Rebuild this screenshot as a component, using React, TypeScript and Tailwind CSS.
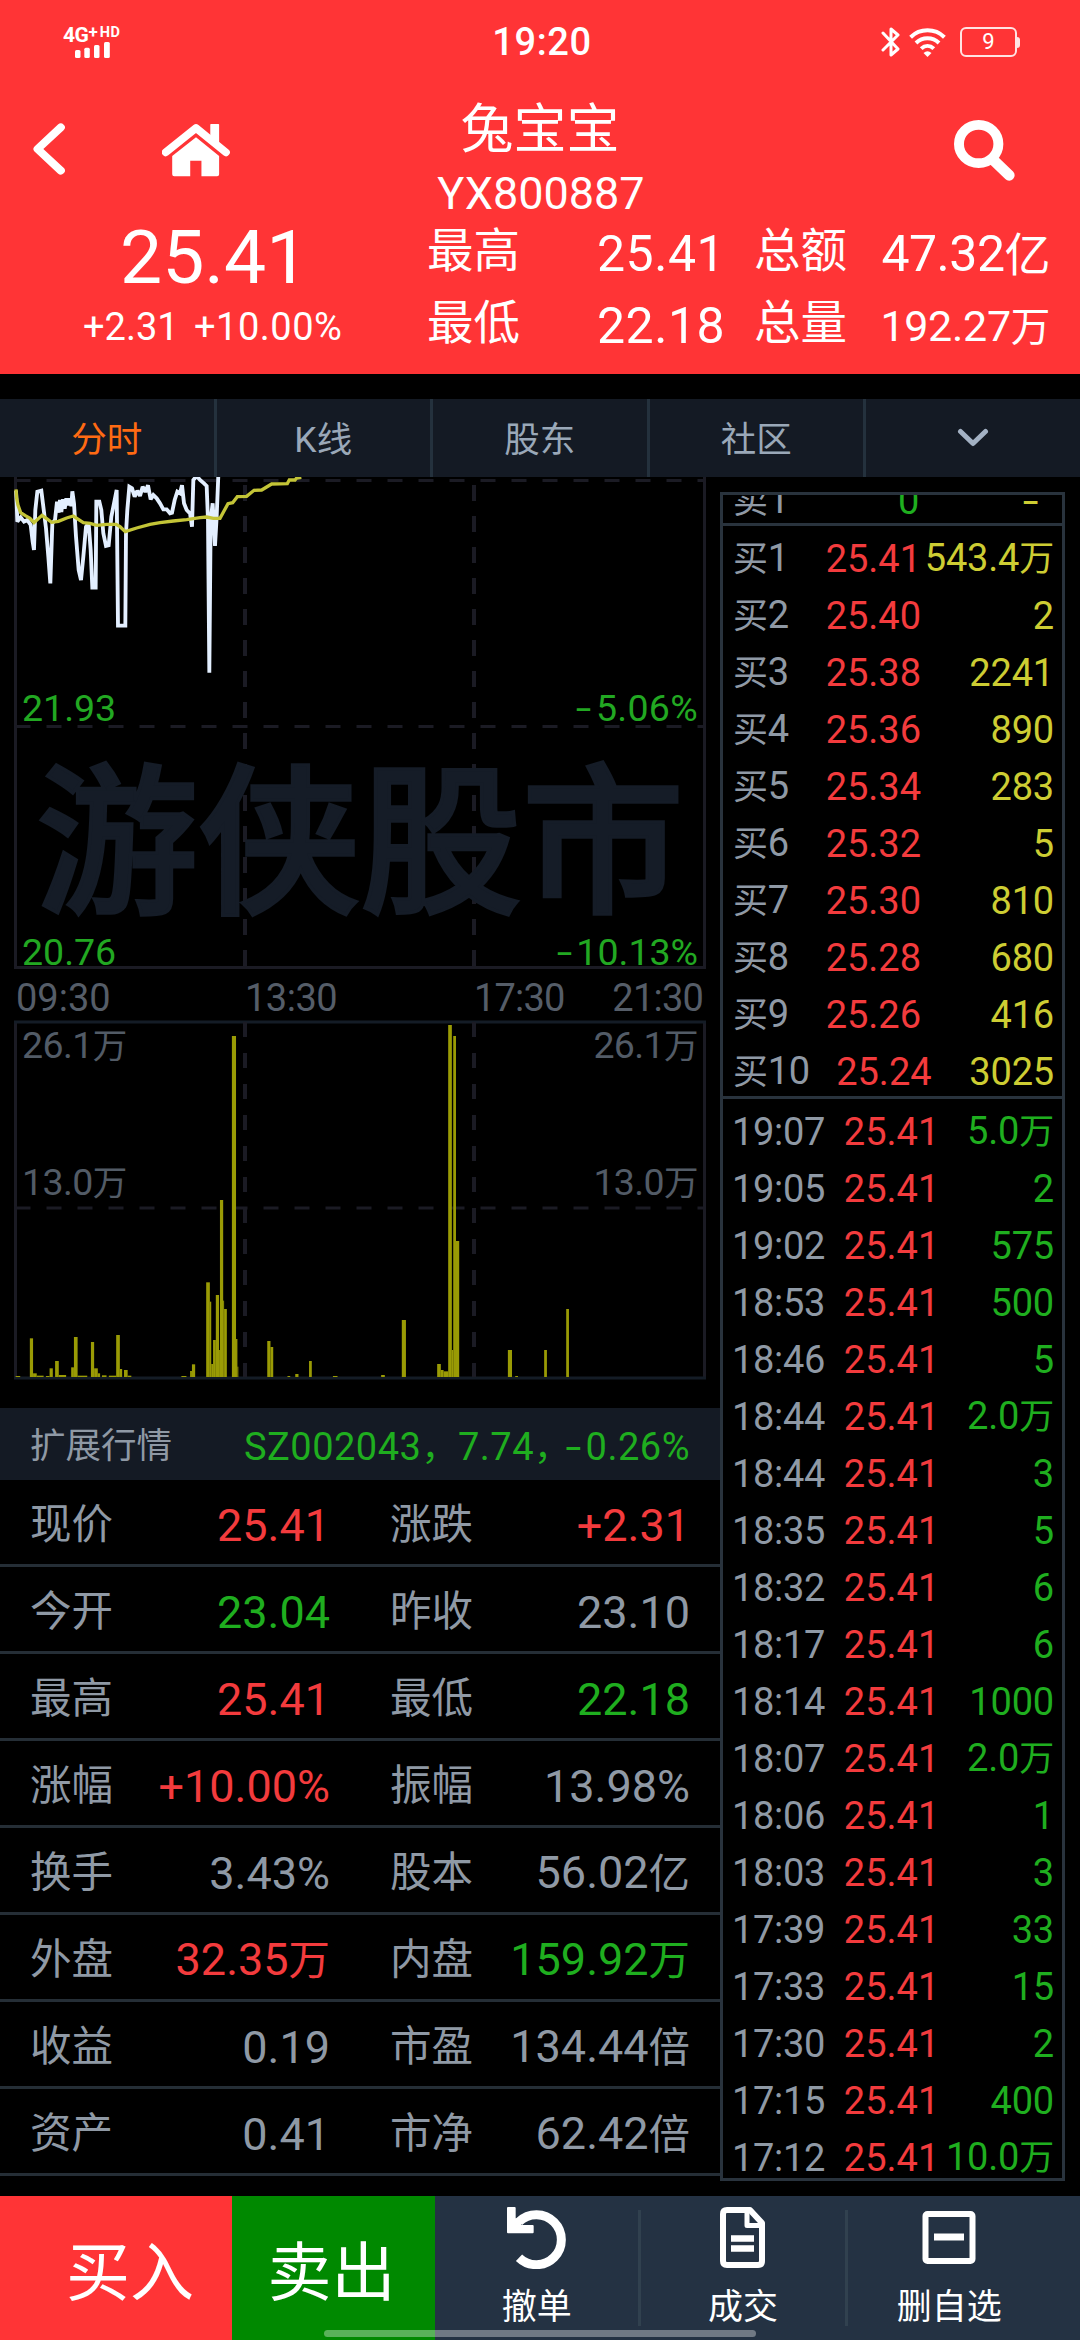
import React from "react";

const RED = "text-[#f33b3d]";
const GREEN = "text-[#1fae1f]";
const GRAY = "text-[#8f99a5]";
const YELLOW = "text-[#cdcd33]";

/* Latin runs in Roboto, Chinese characters slightly smaller beside them. */
function Mixed({ text }: { text: string }) {
  return (
    <>
      {text.split(/([\u4e00-\u9fff]+)/).map((part, i) =>
        i % 2 === 1 ? (
          <span key={i} className="text-[0.92em]">
            {part}
          </span>
        ) : (
          part
        )
      )}
    </>
  );
}

/* Minus sign drawn a little wider than the font's hyphen. */
function Minus() {
  return <span className="mr-[4px] inline-block origin-right scale-x-150">-</span>;
}

function StatusBar() {
  return (
    <div className="flex h-[84px] items-center">
      <div className="flex w-[442px] flex-col items-start pl-[63px]">
        <div className="flex h-[15px] items-start font-bold leading-none">
          <span className="text-[21px] leading-[16px] tracking-[-0.5px]">4G</span>
          <span className="text-[17px] leading-[10px]">+</span>
          <span className="ml-[2px] text-[14.5px] leading-[11px] tracking-[0.5px]">HD</span>
        </div>
        <svg className="ml-[12px]" width="35" height="16" viewBox="0 0 35 16" fill="#fff">
          <rect x="0" y="8" width="5.5" height="8" rx="1.5" />
          <rect x="9.3" y="5.7" width="5.5" height="10.3" rx="1.5" />
          <rect x="19" y="3" width="5.5" height="13" rx="1.5" />
          <rect x="29" y="0" width="5.8" height="16" rx="1.5" />
        </svg>
      </div>
      <div className="w-[200px] text-center text-[38px] font-medium leading-none tracking-[0.6px]">19:20</div>
      <div className="flex flex-1 items-center pl-[239px]">
        <svg width="20" height="30" viewBox="0 0 20 30" fill="none" stroke="#fff" strokeWidth="3" strokeLinejoin="round" strokeLinecap="round">
          <path d="M2 6 L17 22 L10 28 L10 2 L17 8 L2 23" />
        </svg>
        <svg className="ml-[8px]" width="37" height="29" viewBox="0 0 37 29" fill="none" stroke="#fff" strokeWidth="4">
          <path d="M1.6 9.2 C11 0 26 0 35.4 9.2" />
          <path d="M7 15 C13.5 8.8 23.5 8.8 30 15" />
          <path d="M12.2 20.6 C16 17 21 17 24.8 20.6" />
          <path d="M14.5 25 Q18.5 21.5 22.5 25 L18.5 29Z" fill="#fff" stroke="none" />
        </svg>
        <div className="ml-[14px] flex h-[30px] w-[57px] items-center justify-center rounded-[6px] border-2 border-[#ffe3e3] text-[22px] leading-none">
          9
        </div>
        <div className="h-[11px] w-[3px] rounded-r-sm bg-[#ffe3e3]" />
      </div>
    </div>
  );
}

function HeaderStat({ label, children }: { label: string; children: React.ReactNode }) {
  return (
    <div className="flex h-[72px] items-center justify-between">
      <span className="text-[46.5px] leading-none">{label}</span>
      {children}
    </div>
  );
}

function Header() {
  return (
    <header className="h-[374px] bg-[#ff3436] text-white">
      <StatusBar />
      <div className="flex h-[137px]">
        <div className="flex w-[400px] items-start pt-[39px]">
          <svg className="ml-[33px]" width="32" height="52" viewBox="96 371 91 154" preserveAspectRatio="none" fill="none" stroke="#fff" strokeWidth="23" strokeLinecap="round" strokeLinejoin="round">
            <path d="M175 384 L109 448 L175 512" />
          </svg>
          <svg className="ml-[97px]" width="68" height="54" viewBox="469 367 200 162" preserveAspectRatio="none">
            <path d="M611 372 Q611 370 613 370 H635 Q637 370 637 372 V430 L611 408Z" fill="#fff" />
            <path d="M480 455 L569 382 L657 455" fill="none" stroke="#fff" strokeWidth="23" strokeLinecap="round" strokeLinejoin="round" />
            <path d="M569 410 L637 466 V521 Q637 527 631 527 H585 V480 H552 V527 H505 Q499 527 499 521 V466Z" fill="#fff" />
          </svg>
        </div>
        <div className="flex w-[280px] flex-col items-center">
          <div className="h-[88px] text-[53px] leading-[92px]">兔宝宝</div>
          <div className="pl-[2px] text-[45px] leading-[44px]">YX800887</div>
        </div>
        <div className="flex flex-1 items-start pl-[274px] pt-[35px]">
          <svg width="61" height="62" viewBox="1201 356 178 186" preserveAspectRatio="none" fill="none" stroke="#fff">
            <circle cx="1273" cy="431" r="57.5" strokeWidth="29" />
            <path d="M1318 481 L1362 525" strokeWidth="32" strokeLinecap="round" />
          </svg>
        </div>
      </div>
      <div className="flex h-[152px]">
        <div className="w-[427px]">
          <div className="pl-[120px] text-[75px] leading-[72px]">25.41</div>
          <div className="flex pt-[14px] text-[38px] leading-[40px]">
            <span className="w-[112px] pl-[83px]">+2.31</span>
            <span className="pl-[82px] tracking-[0.5px]">+10.00%</span>
          </div>
        </div>
        <div className="mt-[-6px] w-[294px] pr-0">
          <HeaderStat label="最高">
            <span className="w-[124px] pt-[6px] text-[50px] leading-none tracking-[0.5px]">25.41</span>
          </HeaderStat>
          <HeaderStat label="最低">
            <span className="w-[124px] pt-[6px] text-[50px] leading-none tracking-[0.5px]">22.18</span>
          </HeaderStat>
        </div>
        <div className="ml-[33px] mt-[-6px] w-[296px]">
          <HeaderStat label="总额">
            <span className="whitespace-nowrap pt-[6px] text-[50px] leading-none tracking-[-0.5px]">
              <Mixed text="47.32亿" />
            </span>
          </HeaderStat>
          <HeaderStat label="总量">
            <span className="whitespace-nowrap pt-[6px] text-[43px] leading-none tracking-[-0.3px]">
              <Mixed text="192.27万" />
            </span>
          </HeaderStat>
        </div>
      </div>
    </header>
  );
}

function Tabs() {
  return (
    <nav className="mt-[25px] flex h-[78px] bg-[#141a24] text-[35.5px] leading-[83px] text-[#9aa8b8]">
      {["分时", "K线", "股东", "社区"].map((t, i) => (
        <div
          key={t}
          className={
            "h-[78px] w-[216.5px] shrink-0 border-r-[3px] border-[#24313d] text-center " +
            (i === 0 ? "text-[#ff6a13]" : "")
          }
        >
          {t}
        </div>
      ))}
      <div className="flex flex-1 justify-center pt-[29px]">
        <svg width="32" height="20" viewBox="0 0 32 20" fill="none" stroke="#a3b1c3" strokeWidth="5" strokeLinecap="round" strokeLinejoin="round">
          <path d="M3.5 3.5 L16 15.5 L28.5 3.5" />
        </svg>
      </div>
    </nav>
  );
}

const PRICE =
  "48,62 50,100 52,155 62,142 72,155 82,150 92,165 98,215 102,240 106,120 112,65 124,62 130,110 138,175 145,260 151,340 157,160 165,150 171,95 176,128 180,90 184,126 189,88 194,116 199,85 204,106 209,85 214,108 217,64 222,100 228,200 236,300 243,330 250,260 258,170 266,160 272,240 277,353 287,353 289,95 298,95 304,120 310,190 318,228 326,226 334,140 342,100 350,60 354,467 376,467 378,190 382,120 388,50 396,55 404,80 412,62 420,78 428,50 436,66 444,46 452,88 460,75 470,85 480,100 490,118 500,118 510,130 516,128 524,90 532,65 540,70 546,46 552,100 560,120 570,130 576,170 580,30 590,18 600,30 612,40 620,48 624,150 628,608 632,150 638,100 645,228 650,140 655,15";
const AVERAGE =
  "48,58 50,85 54,105 62,128 76,137 90,145 102,158 126,136 140,146 155,157 175,154 200,144 220,138 235,148 250,158 270,160 290,166 320,163 348,163 360,170 376,185 410,174 450,163 480,158 520,153 560,149 600,143 620,141 640,145 660,145 684,101 698,98 712,80 740,79 762,61 785,60 815,42 862,41 868,30 885,30 890,24 904,22";

function PriceChart() {
  return (
    <div className="relative h-[492px] text-[37.5px] leading-none text-[#22a822]">
      <svg className="block" width="720" height="492" viewBox="0 0 720 492">
        <g fill="none" stroke="#1b1b24" strokeWidth="3">
          <path d="M15.5 0 V490.5 H704.5 V0" />
          <path d="M15.5 3.5 H704" strokeDasharray="15 16" />
          <path d="M15.5 249.5 H704" strokeDasharray="15 16" />
          <path d="M245 8 V490" strokeDasharray="16 15" strokeWidth="4" />
          <path d="M474 8 V490" strokeDasharray="16 15" strokeWidth="4" />
        </g>
        <text x="360" y="423.500" fill="#151c27" stroke="#151c27" strokeWidth="3.500" fontSize="162" fontWeight="500" textAnchor="middle" fontFamily='"Noto Sans CJK SC", sans-serif'>
          游侠股市
        </text>
        <g transform="translate(0 -7) scale(0.33333)" fill="none" strokeLinejoin="miter" strokeMiterlimit="2">
          <polyline points={PRICE} stroke="#e3efff" strokeWidth="11.5" />
          <polyline points={AVERAGE} stroke="#c3c437" strokeWidth="10" />
        </g>
      </svg>
      <span className="absolute left-[22px] top-[213px]">21.93</span>
      <span className="absolute right-[22px] top-[213px] tracking-[0.3px]"><Minus />5.06%</span>
      <span className="absolute left-[22px] top-[457px]">20.76</span>
      <span className="absolute right-[22px] top-[457px]"><Minus />10.13%</span>
    </div>
  );
}

/* [left, right, top] of each bar, in chart units. */
const BARS: [number, number, number][] = [
  [34, 44, 1098], [65, 72, 985], [72, 80, 1090], [80, 95, 1097], [100, 108, 1098], [108, 115, 1075], [120, 128, 1053],
  [128, 144, 1095], [155, 161, 1072], [161, 169, 981], [169, 190, 1097], [198, 205, 996], [205, 213, 1075],
  [213, 218, 1090], [222, 232, 1096], [237, 253, 1097], [253, 261, 975], [261, 266, 1077], [270, 278, 1080],
  [278, 286, 1097], [395, 406, 1098], [414, 418, 1083], [418, 425, 1063], [449, 457, 817], [457, 460, 875],
  [460, 464, 1062], [464, 470, 990], [470, 477, 855], [477, 479, 1020], [479, 486, 570], [486, 488, 872],
  [488, 494, 897], [505, 514, 78], [514, 517, 987], [517, 519, 1070], [582, 589, 993], [589, 595, 1011],
  [626, 632, 1098], [643, 650, 1092], [673, 679, 1053], [725, 735, 1098], [830, 838, 1095], [875, 884, 930],
  [952, 960, 1062], [960, 966, 1080], [966, 976, 1084], [976, 984, 45], [984, 987, 1020], [987, 993, 78],
  [993, 1000, 693], [1106, 1115, 1020], [1122, 1128, 1098], [1185, 1191, 1020], [1233, 1239, 897],
];

function VolumeChart() {
  return (
    <div className="relative h-[388px] text-[37.5px] leading-none text-[#525b66]">
      <svg className="block" width="720" height="360" viewBox="0 0 720 360">
        <g fill="none" stroke="#1b1b24" strokeWidth="3">
          <path d="M15.5 1 V358 M704.5 1 V358" />
          <path d="M14 2 H706 M14 358 H706" stroke="#141c26" />
          <path d="M15.5 188 H704" strokeDasharray="15 16" />
          <path d="M245 2 V357" strokeDasharray="15 16" strokeWidth="4" />
          <path d="M474 2 V357" strokeDasharray="15 16" strokeWidth="4" />
        </g>
        <g fill="#9a9b05" transform="translate(0 -10) scale(0.4592 0.33333)">
          {BARS.map(([l, r, t]) => (
            <rect key={l} x={l} y={t} width={r - l} height={1101 - t} />
          ))}
        </g>
      </svg>
      {["top-[7px]", "top-[144px]"].map((top, i) => (
        <div key={top} className={"absolute inset-x-[22px] flex justify-between tracking-[-0.6px] " + top}>
          <span><Mixed text={i ? "13.0万" : "26.1万"} /></span>
          <span><Mixed text={i ? "13.0万" : "26.1万"} /></span>
        </div>
      ))}
    </div>
  );
}

const QUOTES: [string, string, string, string, string, string][] = [
  ["现价", "25.41", RED, "涨跌", "+2.31", RED],
  ["今开", "23.04", GREEN, "昨收", "23.10", GRAY],
  ["最高", "25.41", RED, "最低", "22.18", GREEN],
  ["涨幅", "+10.00%", RED, "振幅", "13.98%", GRAY],
  ["换手", "3.43%", GRAY, "股本", "56.02亿", GRAY],
  ["外盘", "32.35万", RED, "内盘", "159.92万", GREEN],
  ["收益", "0.19", GRAY, "市盈", "134.44倍", GRAY],
  ["资产", "0.41", GRAY, "市净", "62.42倍", GRAY],
];

function QuoteTable() {
  return (
    <section>
      <div className="flex h-[72px] items-center justify-between bg-[#141a24] pl-[30px] pr-[30px] pt-[5px] leading-none">
        <span className={"text-[35.5px] " + GRAY}>扩展行情</span>
        <span className={"whitespace-nowrap text-[38px] tracking-[0.5px] " + GREEN}>
          SZ002043<span className="text-[36px]">，</span>7.74<span className="text-[36px]">，</span><Minus />0.26%
        </span>
      </div>
      {QUOTES.map(([a, av, ac, b, bv, bc]) => (
        <div key={a} className={"flex h-[87px] items-center border-b-[3px] border-[#252e36] pt-[3px] leading-none " + GRAY}>
          <span className="w-[130px] pl-[30px] pt-[2px] text-[41.5px]">{a}</span>
          <span className={"w-[200px] whitespace-nowrap pt-[3px] text-right text-[45px] " + ac}>
            <Mixed text={av} />
          </span>
          <span className="w-[120px] whitespace-nowrap pl-[60px] pt-[2px] text-[41.5px]">{b}</span>
          <span className={"flex w-[240px] justify-end whitespace-nowrap pt-[3px] text-[45px] " + bc}>
            <span><Mixed text={bv} /></span>
          </span>
        </div>
      ))}
    </section>
  );
}

const BIDS: [string, string, string][] = [
  ["买1", "25.41", "543.4万"], ["买2", "25.40", "2"], ["买3", "25.38", "2241"], ["买4", "25.36", "890"],
  ["买5", "25.34", "283"], ["买6", "25.32", "5"], ["买7", "25.30", "810"], ["买8", "25.28", "680"],
  ["买9", "25.26", "416"], ["买10", "25.24", "3025"],
];
const TRADES: [string, string][] = [
  ["19:07", "5.0万"], ["19:05", "2"], ["19:02", "575"], ["18:53", "500"], ["18:46", "5"], ["18:44", "2.0万"],
  ["18:44", "3"], ["18:35", "5"], ["18:32", "6"], ["18:17", "6"], ["18:14", "1000"], ["18:07", "2.0万"],
  ["18:06", "1"], ["18:03", "3"], ["17:39", "33"], ["17:33", "15"], ["17:30", "2"], ["17:15", "400"],
  ["17:12", "10.0万"],
];

function DepthRow({ label, price, volume, tone }: { label: string; price: string; volume: string; tone: string }) {
  return (
    <div className="flex h-[57px] items-center whitespace-nowrap">
      <span className={"tracking-[-0.3px] " + GRAY}><Mixed text={label} /></span>
      <span className={"flex-1 text-center " + RED}>{price}</span>
      <span className={"flex w-[96px] justify-end tracking-[-0.2px] " + tone}>
        <span><Mixed text={volume} /></span>
      </span>
    </div>
  );
}

function DepthPanel() {
  return (
    <aside className="mt-[15px] h-[1689px] w-[345px] shrink-0 overflow-hidden border-[3px] border-[#29333d] text-[38px] leading-none">
      <div className="flex h-[31px] items-end overflow-hidden border-b-[3px] border-[#29333d]">
        <div className="mb-[-6px] flex h-[57px] w-full items-center pl-[10px]">
          <span className={"w-[165px] " + GRAY}><Mixed text="卖1" /></span>
          <span className={"w-[130px] " + GREEN}>0</span>
          <span className={YELLOW}><Minus /></span>
        </div>
      </div>
      <div className="h-[573px] border-b-[3px] border-[#29333d] pl-[10px] pr-[8px] pt-[4px]">
        {BIDS.map(([l, p, v]) => (
          <DepthRow key={l} label={l} price={p} volume={v} tone={YELLOW} />
        ))}
      </div>
      <div className="pl-[9px] pr-[8px] pt-[4px]">
        {TRADES.map(([t, v], i) => (
          <DepthRow key={i} label={t} price="25.41" volume={v} tone={GREEN} />
        ))}
      </div>
    </aside>
  );
}

function ActionBar() {
  return (
    <footer className="relative flex h-[144px] bg-[#243243] text-white">
      <div className="h-[144px] w-[232px] bg-[#ff3436] pl-[28px] text-center text-[64px] leading-[156px]">买入</div>
      <div className="h-[144px] w-[203px] bg-[#008900] pr-[4px] text-center text-[64px] leading-[156px]">卖出</div>
      <div className="flex w-[618px] pr-[2px] text-[35px] leading-none">
        <div className="flex w-[204px] flex-col items-center pt-[11px]">
          <svg width="60" height="62" viewBox="0 0 180 186" fill="none">
            <path d="M36 44 A75 75 0 1 1 36 152" stroke="#fff" strokeWidth="27" />
            <path d="M0 3 Q0 0 3 0 H23 Q26 0 26 3 V34 L56 36 L42 54 H77 Q80 54 80 57 V76 Q80 79 77 79 H3 Q0 79 0 76Z" fill="#fff" />
          </svg>
          <span className="mt-[21px]">撤单</span>
        </div>
        <div className="my-[14px] w-[3px] bg-[#31414f]" />
        <div className="flex w-[204px] flex-col items-center pt-[11px]">
          <svg width="46" height="62" viewBox="0 0 46 62" fill="none" stroke="#fff" strokeWidth="6" strokeLinejoin="round">
            <path d="M7 3 H30 L42 16 V54 Q42 58 38 58 H7 Q3 58 3 54 V7 Q3 3 7 3Z" />
            <path d="M27 3 V18.500 H42" strokeWidth="5" />
            <path d="M11 31.500 H34 M11 41.500 H34" strokeWidth="6.500" />
          </svg>
          <span className="mt-[21px]">成交</span>
        </div>
        <div className="my-[14px] w-[3px] bg-[#31414f]" />
        <div className="flex w-[204px] flex-col items-center pt-[15px]">
          <svg width="54" height="54" viewBox="0 0 54 54" fill="none" stroke="#fff" strokeWidth="6">
            <rect x="3.500" y="3" width="47" height="47" rx="2" />
            <path d="M12 26 H42" strokeWidth="7" strokeLinecap="butt" />
          </svg>
          <span className="mt-[25px] whitespace-nowrap">删自选</span>
        </div>
      </div>
      <div className="absolute bottom-[3px] left-[324px] h-[7px] w-[432px] rounded-full bg-white/35" />
    </footer>
  );
}

export default function App() {
  return (
    <div className="h-[2340px] w-[1080px] overflow-hidden bg-black font-[Roboto,'Noto_Sans_CJK_SC',sans-serif]">
      <Header />
      <Tabs />
      <main className="flex h-[1719px]">
        <div className="w-[720px] shrink-0">
          <PriceChart />
          <div className="flex h-[51px] items-center pl-[16px] pr-[17px] pt-[7px] text-[38px] leading-none text-[#555d68]">
            <span className="w-[229px]">09:30</span>
            <span className="w-[229px] tracking-[-0.5px]">13:30</span>
            <span className="flex flex-1 justify-between tracking-[-0.8px]">
              <span>17:30</span>
              <span>21:30</span>
            </span>
          </div>
          <VolumeChart />
          <QuoteTable />
        </div>
        <DepthPanel />
      </main>
      <ActionBar />
    </div>
  );
}
